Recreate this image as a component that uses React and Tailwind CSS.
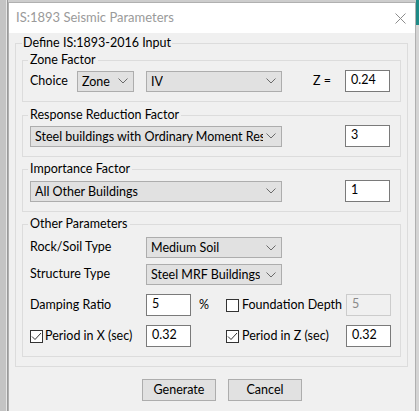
import React from "react";

const FONT = { fontFamily: 'Lato, "Noto Sans", Arial, sans-serif' };

function Chevron() {
  return (
    <svg width="10" height="6" viewBox="0 0 10 6" className="shrink-0">
      <polyline points="0.5,0.5 5,5 9.5,0.5" fill="none" stroke="#6a6a6a" strokeWidth="1" />
    </svg>
  );
}

function Select({ value, className = "" }) {
  return (
    <div
      className={`flex h-[21px] items-center justify-between gap-[3px] border border-[#adadad] bg-[#e1e1e1] pl-[4px] pr-[5px] ${className}`}
    >
      <span className="overflow-hidden whitespace-nowrap leading-[19px]">{value}</span>
      <Chevron />
    </div>
  );
}

function TextBox({ value, disabled = false, className = "" }) {
  return (
    <div
      className={`flex h-[22px] w-[45px] shrink-0 items-start border pl-[5px] pt-[1px] leading-[16px] ${
        disabled ? "border-[#cccccc] bg-[#f0f0f0] text-[#8a8a8a]" : "border-[#7a7a7a] bg-white text-black"
      } ${className}`}
    >
      {value}
    </div>
  );
}

function CheckBox({ checked }) {
  return (
    <div className="flex h-[13px] w-[13px] shrink-0 items-center justify-center border border-[#333333] bg-white">
      {checked && (
        <svg width="11" height="11" viewBox="0 0 11 11">
          <polyline points="1,5.5 4,8.5 10,2" fill="none" stroke="#333333" strokeWidth="1" />
        </svg>
      )}
    </div>
  );
}

function Group({ title, children, className = "" }) {
  return (
    <fieldset className={`w-[379px] border border-[#dcdcdc] px-[7px] ${className}`}>
      <legend className="-ml-[2px] px-[2px] leading-[16px]">{title}</legend>
      {children}
    </fieldset>
  );
}

export default function App() {
  return (
    <div
      className="flex h-[411px] w-[419px] overflow-hidden bg-[#cdcdcd] text-[12.5px] text-black"
      style={FONT}
    >
      {/* left backdrop */}
      <div className="flex w-[8px] shrink-0">
        <div className="w-[6px] bg-[#c4c4c4]" />
        <div className="w-[1px] bg-[#e6e6e6]" />
        <div className="w-[1px] bg-[#9a9a9a]" />
      </div>

      {/* window */}
      <div className="mt-[2px] flex h-[420px] w-[408px] shrink-0 flex-col border border-[#b0b0b0] bg-[#f0f0f0]">
        {/* title bar */}
        <div className="flex h-[30px] shrink-0 items-center justify-between bg-white pl-[7px] pr-[9px]">
          <span className="text-[13px] text-[#9a9a9a]">IS:1893 Seismic Parameters</span>
          <svg width="11" height="11" viewBox="0 0 11 11">
            <line x1="0.5" y1="0.5" x2="10.5" y2="10.5" stroke="#8c8c8c" strokeWidth="1" />
            <line x1="10.5" y1="0.5" x2="0.5" y2="10.5" stroke="#8c8c8c" strokeWidth="1" />
          </svg>
        </div>

        {/* body */}
        <div className="flex flex-col pl-[6px]">
          <fieldset className="mt-[2px] w-[393px] border border-[#dcdcdc] px-[6px] pb-[9px]">
            <legend className="px-[1px] leading-[16px]">Define IS:1893-2016 Input</legend>

            {/* Zone factor */}
            <Group title="Zone Factor" className="mt-[1px] pb-[9px]">
              <div className="mt-[2px] flex h-[22px] items-center">
                <span className="w-[47px]">Choice</span>
                <Select value="Zone" className="w-[57px]" />
                <Select value="IV" className="ml-[12px] w-[136px]" />
                <span className="ml-[31px] w-[32px]">Z =</span>
                <TextBox value="0.24" />
              </div>
            </Group>

            {/* Response reduction */}
            <Group title="Response Reduction Factor" className="mt-[5px] pb-[9px]">
              <div className="mt-[2px] flex h-[22px] items-center">
                <Select value="Steel buildings with Ordinary Moment Resisting Frame" className="w-[252px]" />
                <TextBox value="3" className="ml-[63px]" />
              </div>
            </Group>

            {/* Importance */}
            <Group title="Importance Factor" className="mt-[4px] pb-[9px]">
              <div className="mt-[3px] flex h-[22px] items-center">
                <Select value="All Other Buildings" className="w-[252px]" />
                <TextBox value="1" className="ml-[63px]" />
              </div>
            </Group>

            {/* Other params */}
            <Group title="Other Parameters" className="mt-[4px] pb-[9px]">
              <div className="mt-[5px] flex h-[21px] items-center">
                <span className="w-[116px]">Rock/Soil Type</span>
                <Select value="Medium Soil" className="w-[136px]" />
              </div>
              <div className="mt-[6px] flex h-[21px] items-center">
                <span className="w-[116px]">Structure Type</span>
                <Select value="Steel MRF Buildings" className="w-[136px]" />
              </div>
              <div className="mt-[9px] flex h-[22px] items-center">
                <span className="w-[116px]">Damping Ratio</span>
                <TextBox value="5" />
                <span className="ml-[8px] w-[27px]">%</span>
                <CheckBox checked={false} />
                <span className="ml-[3px] w-[104px] whitespace-nowrap">Foundation Depth</span>
                <TextBox value="5" disabled />
              </div>
              <div className="mt-[9px] flex h-[22px] items-center">
                <div className="flex w-[116px] items-center">
                  <CheckBox checked />
                  <span className="ml-[2px] whitespace-nowrap">Period in X (sec)</span>
                </div>
                <TextBox value="0.32" />
                <span className="w-[35px]" />
                <CheckBox checked />
                <span className="ml-[3px] w-[104px] whitespace-nowrap">Period in Z (sec)</span>
                <TextBox value="0.32" />
              </div>
            </Group>
          </fieldset>

          {/* buttons */}
          <div className="mt-[12px] flex pl-[127px]">
            <div className="flex h-[22px] w-[74px] items-center justify-center border border-[#adadad] bg-[#e1e1e1]">
              Generate
            </div>
            <div className="ml-[12px] flex h-[22px] w-[74px] items-center justify-center border border-[#adadad] bg-[#e1e1e1]">
              Cancel
            </div>
          </div>
        </div>
      </div>

      {/* right backdrop */}
      <div className="flex flex-1 flex-col">
        <div className="h-[25px] bg-[#1f8a86]" />
        <div className="flex-1 bg-[#d4d4d4]" />
      </div>
    </div>
  );
}
